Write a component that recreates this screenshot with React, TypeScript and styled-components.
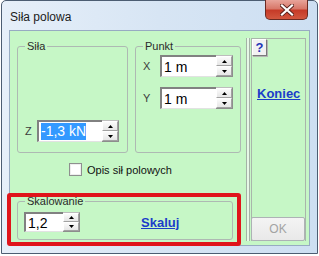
import React from "react";
import styled, { createGlobalStyle } from "styled-components";

const GlobalStyle = createGlobalStyle`
  html, body { margin: 0; padding: 0; background: #ffffff; }
  body { font-family: "Liberation Sans", Arial, sans-serif; }
  * { box-sizing: border-box; }
`;

const Page = styled.div`
  width: 319px;
  height: 256px;
  padding-left: 1px;
`;

const Window = styled.div`
  width: 317px;
  height: 254px;
  border: 1px solid #4c5d72;
  border-radius: 5px 5px 0 0;
  background: linear-gradient(90deg, #e6eff9 0%, #d7e5f4 50%, #cddff2 100%);
  display: flex;
  flex-direction: column;
`;

const TitleBar = styled.div`
  height: 29px;
  display: flex;
  justify-content: space-between;
  align-items: flex-start;
  padding-left: 8px;
  padding-right: 9px;
`;

const Title = styled.span`
  font-size: 12px;
  line-height: 14px;
  margin-top: 9px;
  color: #1b1b1b;
`;

const CloseButton = styled.div`
  width: 43px;
  height: 20px;
  margin-top: -1px;
  border: 1px solid #6a2a22;
  border-top: none;
  border-radius: 0 0 5px 5px;
  background: linear-gradient(#e8a49a 0%, #d8786a 45%, #c63b28 55%, #d2573f 100%);
  display: flex;
  align-items: center;
  justify-content: center;
`;

const Frame = styled.div`
  flex: 1;
  padding: 0 7px 7px 7px;
`;

const Client = styled.div`
  position: relative;
  height: 216px;
  border: 1px solid #97abc2;
  background: #c6f7c6;
  display: flex;
  align-items: stretch;
`;

const MainCol = styled.div`
  width: 231px;
  padding: 9px 0 0 7px;
  display: flex;
  flex-direction: column;
`;

const TopRow = styled.div`
  display: flex;
  gap: 7px;
`;

const Group = styled.fieldset<{ $w: number; $h: number }>`
  margin: 0;
  width: ${(p) => p.$w}px;
  height: ${(p) => p.$h}px;
  min-inline-size: 0;
  border: 1px solid #aeb9b3;
  border-radius: 3px;
  padding: 0;
`;

const Legend = styled.legend`
  margin-left: 7px;
  padding: 0 2px;
  font-size: 11px;
  line-height: 13px;
  color: #2a2a2a;
`;

const SilaBody = styled.div`
  height: 100%;
  display: flex;
  align-items: flex-end;
  padding: 0 0 10px 7px;
`;

const PunktBody = styled.div`
  display: flex;
  flex-direction: column;
  gap: 10px;
  padding: 2px 0 0 7px;
`;

const FieldRow = styled.div<{ $gap: number }>`
  display: flex;
  align-items: center;
  gap: ${(p) => p.$gap}px;
`;

const AxisLabel = styled.span`
  font-size: 11px;
  color: #3c3c3c;
  width: 8px;
`;

const Spin = styled.div<{ $h: number }>`
  display: flex;
  height: ${(p) => p.$h}px;
`;

const SpinField = styled.div<{ $w: number }>`
  width: ${(p) => p.$w}px;
  background: #fff;
  border-top: 2px solid #818181;
  border-left: 2px solid #818181;
  border-bottom: 1px solid #e2e2e2;
  font-size: 14px;
  color: #000;
  display: flex;
  align-items: center;
  padding-left: 2px;
`;

const Selected = styled.span`
  background: #3399ff;
  color: #fff;
  line-height: 17px;
`;

const SpinButtons = styled.div`
  width: 17px;
  display: flex;
  flex-direction: column;
  border-right: 1px solid #8d8d8d;
  border-bottom: 1px solid #8d8d8d;
  border-top: 1px solid #bdbdbd;
`;

const SpinButton = styled.div`
  flex: 1;
  background: linear-gradient(#fbfbfb, #e6e6e6);
  border: 1px solid;
  border-color: #ffffff #a2a2a2 #a2a2a2 #ffffff;
  display: flex;
  align-items: center;
  justify-content: center;
`;

const CheckRow = styled.label`
  display: flex;
  align-items: center;
  gap: 5px;
  height: 13px;
  margin: 10px 0 0 52px;
  font-size: 11px;
  color: #111;
`;

const CheckBox = styled.span`
  width: 13px;
  height: 13px;
  border: 1px solid #8e8f8f;
  background: #fff;
  box-shadow: inset 0 0 0 1px #eeeeee;
`;

const ScaleGroupWrap = styled.div`
  margin-top: 19px;
`;

const ScaleBody = styled.div`
  display: flex;
  align-items: center;
  gap: 61px;
  padding: 4px 0 0 6px;
`;

const LinkText = styled.span`
  font-size: 13px;
  font-weight: bold;
  color: #1b3cc9;
  text-decoration: underline;
`;

const Divider = styled.div`
  width: 4px;
  margin: 7px 0 4px 5px;
  border-left: 1px solid #a4b2a6;
  border-right: 1px solid #a4b2a6;
  background: #e6f8e6;
`;

const SidePanel = styled.div`
  width: 55px;
  margin: 7px 0 4px 1px;
  border: 1px solid #a9b5ab;
  border-bottom: none;
  display: flex;
  flex-direction: column;
`;

const HelpButton = styled.div`
  width: 15px;
  height: 17px;
  background: #f2f2f2;
  border: 1px solid;
  border-color: #ffffff #7a7a7a #7a7a7a #ffffff;
  box-shadow: 1px 1px 0 #b5b5b5;
  font-size: 13px;
  font-weight: bold;
  color: #1f35b8;
  display: flex;
  align-items: center;
  justify-content: center;
  line-height: 1;
`;

const KoniecWrap = styled.div`
  margin: 28px 0 0 5px;
`;

const OkButton = styled.div`
  margin-top: auto;
  margin-left: -1px;
  height: 24px;
  border: 1px solid #adb2b5;
  border-radius: 2px;
  background: linear-gradient(#f4f4f4, #e9e9e9);
  color: #a3a3a3;
  font-size: 12px;
  display: flex;
  align-items: center;
  justify-content: center;
`;

const Highlight = styled.div`
  position: absolute;
  left: -3px;
  top: 162px;
  width: 234px;
  height: 53px;
  border: 4px solid #e0141b;
  border-radius: 3px;
  pointer-events: none;
`;

const Arrow = ({ up }: { up?: boolean }) => (
  <svg width="5" height="3" viewBox="0 0 5 3">
    <path d={up ? "M2.5 0 L5 3 L0 3 Z" : "M0 0 L5 0 L2.5 3 Z"} fill="#000" />
  </svg>
);

const SpinControl = ({
  w,
  h,
  children,
}: {
  w: number;
  h: number;
  children: React.ReactNode;
}) => (
  <Spin $h={h}>
    <SpinField $w={w}>{children}</SpinField>
    <SpinButtons>
      <SpinButton>
        <Arrow up />
      </SpinButton>
      <SpinButton>
        <Arrow />
      </SpinButton>
    </SpinButtons>
  </Spin>
);

export default function App() {
  return (
    <Page>
      <GlobalStyle />
      <Window>
        <TitleBar>
          <Title>Siła polowa</Title>
          <CloseButton>
            <svg width="14" height="12" viewBox="0 0 14 12">
              <path d="M2 1.5 L12 10.5 M12 1.5 L2 10.5" stroke="#5a231d" strokeWidth="4" strokeLinecap="square" />
              <path d="M2 1.5 L12 10.5 M12 1.5 L2 10.5" stroke="#ffffff" strokeWidth="2.2" strokeLinecap="square" />
            </svg>
          </CloseButton>
        </TitleBar>
        <Frame>
          <Client>
            <MainCol>
              <TopRow>
                <Group $w={111} $h={113}>
                  <Legend>Siła</Legend>
                  <SilaBody>
                    <FieldRow $gap={4}>
                      <AxisLabel>Z</AxisLabel>
                      <SpinControl w={65} h={22}>
                        <Selected>-1,3 kN</Selected>
                      </SpinControl>
                    </FieldRow>
                  </SilaBody>
                </Group>
                <Group $w={106} $h={113}>
                  <Legend>Punkt</Legend>
                  <PunktBody>
                    <FieldRow $gap={9}>
                      <AxisLabel>X</AxisLabel>
                      <SpinControl w={56} h={22}>1 m</SpinControl>
                    </FieldRow>
                    <FieldRow $gap={9}>
                      <AxisLabel>Y</AxisLabel>
                      <SpinControl w={56} h={22}>1 m</SpinControl>
                    </FieldRow>
                  </PunktBody>
                </Group>
              </TopRow>
              <CheckRow>
                <CheckBox />
                Opis sił polowych
              </CheckRow>
              <ScaleGroupWrap>
                <Group $w={216} $h={45}>
                  <Legend>Skalowanie</Legend>
                  <ScaleBody>
                    <SpinControl w={39} h={20}>1,2</SpinControl>
                    <LinkText>Skaluj</LinkText>
                  </ScaleBody>
                </Group>
              </ScaleGroupWrap>
            </MainCol>
            <Divider />
            <SidePanel>
              <HelpButton>?</HelpButton>
              <KoniecWrap>
                <LinkText>Koniec</LinkText>
              </KoniecWrap>
              <OkButton>OK</OkButton>
            </SidePanel>
            <Highlight />
          </Client>
        </Frame>
      </Window>
    </Page>
  );
}
